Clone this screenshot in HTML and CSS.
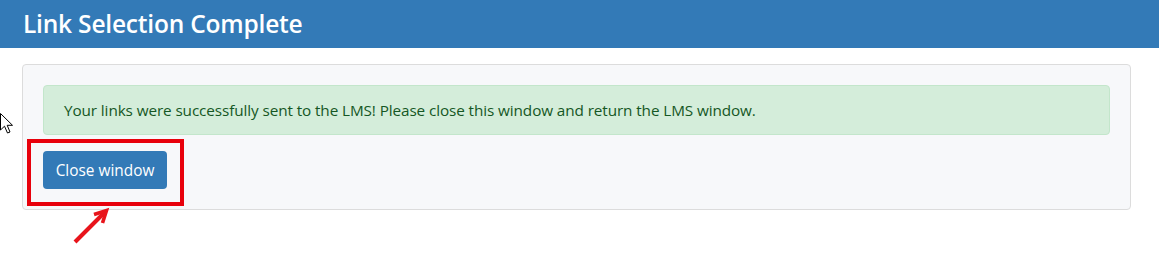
FILE: index.html
```html
<!DOCTYPE html>
<html>
<head>
<meta charset="utf-8">
<link rel="stylesheet" href="styles.css">
</head>
<body>
<header class="title-bar"><h1 class="title">Link Selection Complete</h1></header>
<main class="main">
  <section class="panel">
    <div class="alert">Your links were successfully sent to the LMS! Please close this window and return the LMS window.</div>
    <div class="btn-wrap">
      <button class="btn">Close window</button>
      <span class="highlight"></span>
    </div>
  </section>
</main>
<svg class="arrow" width="44" height="44" viewBox="0 0 44 44"><line x1="5" y1="38" x2="35" y2="8" stroke="#e8141b" stroke-width="4"/><polyline points="24,10.5 36.5,6.5 32.5,19" stroke="#e8141b" stroke-width="3.6" fill="none"/></svg>
<svg class="cursor" width="14" height="22" viewBox="0 0 14 22"><path d="M0.5 0.5 L0.5 17 L4.5 13.2 L7.5 20 L10 19 L7.2 12.3 L12.5 12.3 Z" fill="#fff" stroke="#000" stroke-width="1"/></svg>
</body>
</html>
```
FILE: styles.css
```css
html, body { margin: 0; padding: 0; background: #fff; }
body { font-family: "Open Sans", "Noto Sans", sans-serif; position: relative; min-height: 274px; }
.title-bar { background: #337ab7; height: 48px; display: flex; align-items: center; padding-left: 23px; }
.title { margin: 0; color: #fff; font-size: 24.5px; font-weight: 600; letter-spacing: -0.2px; line-height: 1; }
.main { padding: 16px 28px 0 22px; }
.panel { background: #f7f8fa; border: 1px solid #dcdcdc; border-radius: 4px; padding: 20px 20px 20px 20px; }
.alert { background: #d4edda; border: 1px solid #c3e6cb; border-radius: 4px; color: #155724; font-size: 15.3px; line-height: 24px; padding: 12px 20px; margin-bottom: 16px; letter-spacing: -0.1px; }
.btn-wrap { position: relative; display: inline-block; vertical-align: top; }
.btn { display: block; background: #337ab7; color: #fff; border: 0; border-radius: 4px; height: 38px; width: 124px; padding: 0; font-family: inherit; font-size: 15.4px; }
.highlight { position: absolute; left: -16px; top: -12px; width: 149px; height: 59px; border: 4px solid #e8000b; }
.arrow { position: absolute; left: 70px; top: 204px; overflow: visible; }
.cursor { position: absolute; left: 0; top: 113px; }
```
